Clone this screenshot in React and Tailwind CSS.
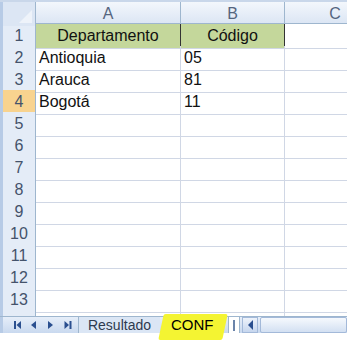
import React from 'react';

const rows = [
  ['Departamento', 'Código'],
  ['Antioquia', '05'],
  ['Arauca', '81'],
  ['Bogotá', '11'],
  ['', ''], ['', ''], ['', ''], ['', ''], ['', ''], ['', ''], ['', ''], ['', ''], ['', ''],
];

const cols = 'grid grid-cols-[36px_145px_104px_100px]';

function NavArrows() {
  return (
    <svg width="78" height="16" viewBox="0 0 78 16" className="shrink-0">
      <g fill="#2a4f8f">
        <rect x="11" y="4" width="2" height="8" />
        <polygon points="13.5,8 18,4 18,12" />
        <polygon points="28,8 33,4 33,12" />
        <polygon points="50,8 45,4 45,12" />
        <polygon points="66,8 61.5,4 61.5,12" />
        <rect x="66.5" y="4" width="2" height="8" />
      </g>
    </svg>
  );
}

export default function App() {
  return (
    <div className="w-[347px] h-[341px] overflow-hidden bg-white font-['Liberation_Sans',Arial,sans-serif] flex flex-col">
      <div className="h-[2px] bg-[#c9d7ea] shrink-0" />
      {/* column headers */}
      <div className={`${cols} h-[22px] shrink-0 border-b border-[#9eb6ce] bg-gradient-to-b from-[#f3f7fc] to-[#dce6f4] text-[16px] text-[#55657e]`}>
        <div className="relative border-r border-[#9eb6ce] border-l-[3px] border-l-[#b7cbe6] bg-[#dce6f4]">
          <div className="absolute right-[3px] bottom-[3px] w-0 h-0 border-l-[13px] border-l-transparent border-b-[13px] border-b-[#eef3fa]" />
        </div>
        <div className="flex items-center justify-center border-r border-[#9eb6ce]">A</div>
        <div className="flex items-center justify-center border-r border-[#9eb6ce]">B</div>
        <div className="flex items-center justify-center">C</div>
      </div>
      {/* rows */}
      {rows.map((r, i) => (
        <div key={i} className={`${cols} h-[22px] shrink-0 text-[16px] text-[#111]`}>
          <div
            className={`flex items-center justify-center border-r border-b border-[#9eb6ce] border-l-[3px] border-l-[#b7cbe6] text-[#44536b] ${
              i === 3 ? 'bg-[#f8d38f]' : 'bg-[#e4ecf7]'
            }`}
          >
            {i + 1}
          </div>
          <div
            className={`flex items-center border-r border-b border-[#d0d7e5] ${
              i === 0 ? 'bg-[#c4d79b] justify-center border-r-[#333]' : 'px-[3px]'
            }`}
          >
            {r[0]}
          </div>
          <div
            className={`flex items-center border-r border-b border-[#d0d7e5] ${
              i === 0 ? 'bg-[#c4d79b] justify-center border-r-[#333]' : 'px-[3px]'
            }`}
          >
            {r[1]}
          </div>
          <div className="border-b border-[#d0d7e5]" />
        </div>
      ))}
      <div className={`${cols} h-[6px] shrink-0`}>
        <div className="border-r border-[#9eb6ce] border-l-[3px] border-l-[#b7cbe6] bg-[#e4ecf7]" />
        <div className="border-r border-[#d0d7e5]" />
        <div className="border-r border-[#d0d7e5]" />
        <div />
      </div>
      {/* sheet tabs */}
      <div className="relative h-[17px] shrink-0 flex items-stretch bg-gradient-to-b from-[#e6eef9] to-[#c9d9ef] border-t border-[#9eb6ce]">
        <div className="flex items-center border-l-[3px] border-l-[#b7cbe6] w-[78px]">
          <NavArrows />
        </div>
        <div className="w-[82px] flex items-center justify-center border-l border-[#9eb6ce] text-[14px] text-[#2d3a4f] bg-[#dbe6f5]">
          Resultado
        </div>
        <div className="relative w-[68px] flex items-center">
          <div className="absolute left-[1px] top-[-3px] w-[64px] h-[26px] bg-[#f4f432] -skew-x-12 rounded-[2px]" />
          <span className="relative pl-[11px] text-[15px] text-black">CONF</span>
        </div>
        <div className="w-[12px] flex items-center justify-center border-l border-r border-[#9eb6ce] bg-white">
          <div className="w-[2px] h-[11px] border-l border-r border-[#6b84aa]" />
        </div>
        <div className="w-[16px] flex items-center justify-center ml-[2px] bg-gradient-to-b from-[#eef3fb] to-[#c6d6ee] border border-[#a3b9d9]">
          <div className="w-0 h-0 border-t-[5px] border-b-[5px] border-r-[5px] border-t-transparent border-b-transparent border-r-[#2a4f8f]" />
        </div>
        <div className="flex-1 ml-[2px] bg-gradient-to-b from-[#f6f9fd] to-[#d3e0f2] border border-[#a3b9d9] rounded-[2px]" />
      </div>
      <div className="flex-1 bg-white" />
    </div>
  );
}
